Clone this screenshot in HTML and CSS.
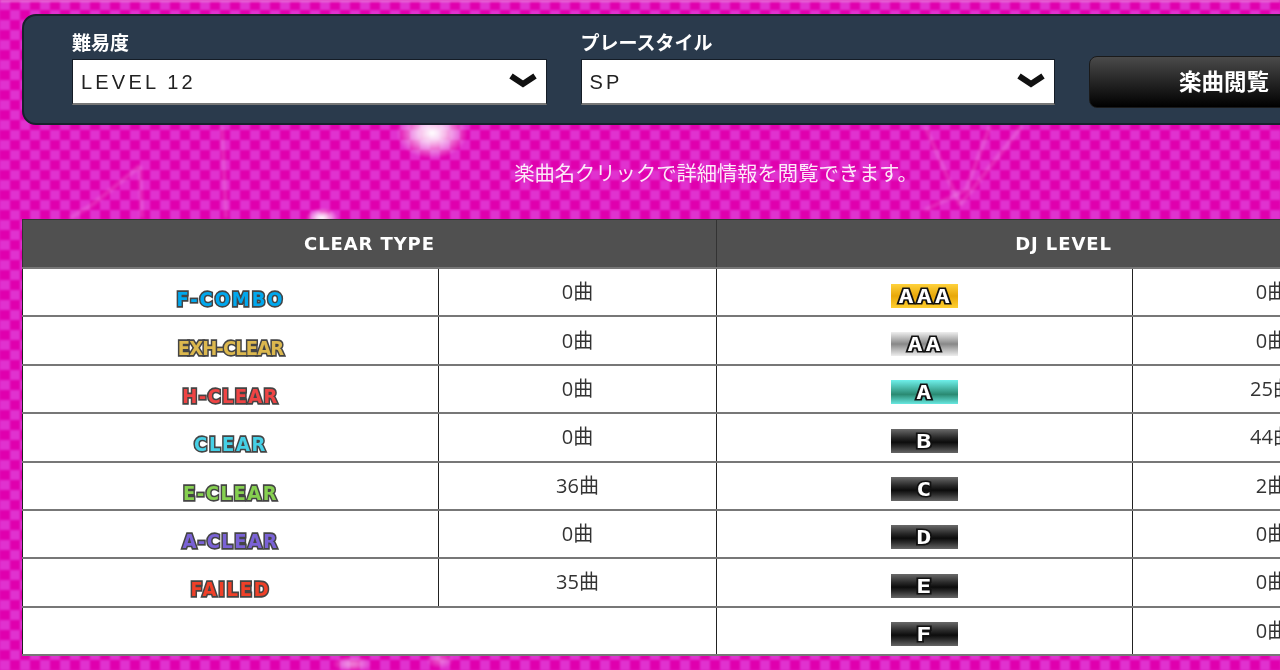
FILE: index.html
```html
<!DOCTYPE html>
<html lang="ja">
<head>
<meta charset="utf-8">
<title>楽曲閲覧</title>
<link rel="stylesheet" href="styles.css">
</head>
<body>
<div class="backdrop">
<svg class="sparkles" width="1280" height="670" viewBox="0 0 1280 670" aria-hidden="true">
  <defs>
    <radialGradient id="glow"><stop offset="0" stop-color="#fff" stop-opacity="1"/><stop offset=".35" stop-color="#fff" stop-opacity=".75"/><stop offset="1" stop-color="#fff" stop-opacity="0"/></radialGradient>
    <filter id="soft"><feGaussianBlur stdDeviation="1.5"/></filter>
  </defs>
  <ellipse cx="432" cy="133" rx="36" ry="26" fill="url(#glow)"/>
  <ellipse cx="322" cy="218" rx="16" ry="10" fill="url(#glow)"/>
  <ellipse cx="352" cy="664" rx="20" ry="8" fill="url(#glow)" opacity=".5"/>
  <ellipse cx="440" cy="660" rx="14" ry="9" fill="url(#glow)" opacity=".35"/>
  <g fill="none" stroke="#fff" stroke-opacity=".22" stroke-width="3" filter="url(#soft)">
    <path d="M140 166 L92 205 L70 218"/>
    <path d="M140 166 L142 218"/>
    <path d="M222 126 L226 218"/>
    <path d="M990 126 L966 190 L925 210"/>
    <path d="M960 205 L925 126"/>
    <path d="M960 205 L1022 126"/>
  </g>
</svg>
</div>
<div class="page">
  <form class="filter-panel">
    <div class="field">
      <label class="field-label">難易度</label>
      <div class="select"><span class="select-value">LEVEL 12</span><svg class="chevron" width="28" height="20" viewBox="0 0 28 20"><path d="M2 4 L14 12 L26 4"/></svg></div>
    </div>
    <div class="field">
      <label class="field-label">プレースタイル</label>
      <div class="select"><span class="select-value">SP</span><svg class="chevron" width="28" height="20" viewBox="0 0 28 20"><path d="M2 4 L14 12 L26 4"/></svg></div>
    </div>
    <button class="browse" type="button"><span class="browse-text">楽曲閲覧</span></button>
  </form>
  <p class="notice">楽曲名クリックで詳細情報を閲覧できます。</p>
  <table class="stats">
    <colgroup><col class="col-a"><col class="col-b"><col class="col-a"><col class="col-b"></colgroup>
    <thead><tr><th colspan="2">CLEAR TYPE</th><th colspan="2">DJ LEVEL</th></tr></thead>
    <tbody>
      <tr><td><span class="lamp fc">F-COMBO</span></td><td>0曲</td><td><span class="grade gold"><b>AAA</b></span></td><td>0曲</td></tr>
      <tr><td><span class="lamp ex">EXH-CLEAR</span></td><td>0曲</td><td><span class="grade silver"><b>AA</b></span></td><td>0曲</td></tr>
      <tr><td><span class="lamp hard">H-CLEAR</span></td><td>0曲</td><td><span class="grade teal"><b>A</b></span></td><td>25曲</td></tr>
      <tr><td><span class="lamp clr">CLEAR</span></td><td>0曲</td><td><span class="grade"><b>B</b></span></td><td>44曲</td></tr>
      <tr><td><span class="lamp easy">E-CLEAR</span></td><td>36曲</td><td><span class="grade"><b>C</b></span></td><td>2曲</td></tr>
      <tr><td><span class="lamp assist">A-CLEAR</span></td><td>0曲</td><td><span class="grade"><b>D</b></span></td><td>0曲</td></tr>
      <tr><td><span class="lamp fail">FAILED</span></td><td>35曲</td><td><span class="grade"><b>E</b></span></td><td>0曲</td></tr>
      <tr><td colspan="2"></td><td><span class="grade"><b>F</b></span></td><td>0曲</td></tr>
    </tbody>
  </table>
</div>
</body>
</html>
```
FILE: styles.css
```css
html, body {
  margin: 0;
  height: 670px;
  overflow: hidden;
}
body {
  position: relative;
  background: #e018be;
  font-family: "Open Sans", "Noto Sans CJK JP", sans-serif;
  font-size: 20px;
}
.backdrop {
  position: absolute;
  left: 0;
  top: 0;
  width: 1280px;
  height: 670px;
  background-image:
    linear-gradient(#e87ad8, #e87ad8),
    repeating-conic-gradient(#e000ae 0 25%, #e032cf 0 50%);
  background-size: 100% 2px, 20px 20px;
  background-repeat: no-repeat, repeat;
  filter: blur(0.8px);
}
.page {
  position: relative;
  width: 1388px;
  padding: 14px 0 0 22px;
  filter: blur(0.45px);
}
.filter-panel {
  box-sizing: border-box;
  height: 111px;
  display: flex;
  align-items: flex-start;
  gap: 34px;
  padding: 13px 49px 0 48px;
  background: #2a3a4c;
  border: 2px solid #18212c;
  border-radius: 14px;
}
.field {
  width: 475px;
  display: flex;
  flex-direction: column;
}
.field-label {
  height: 30px;
  line-height: 25px;
  color: #fff;
  font-family: "Noto Sans CJK JP", sans-serif;
  font-weight: 700;
  font-size: 19px;
}
.select {
  box-sizing: border-box;
  height: 46px;
  display: flex;
  align-items: center;
  justify-content: space-between;
  padding: 1px 9px 0 8px;
  background: #fff;
  border: 1px solid #141c26;
  border-bottom: 2px solid #777;
}
.select-value {
  font-family: "Liberation Sans", sans-serif;
  font-size: 20px;
  letter-spacing: 3.2px;
  color: #222;
}
.chevron {
  fill: none;
  stroke: #111;
  stroke-width: 6;
}
.browse {
  flex: 0 0 270px;
  height: 52px;
  margin-top: 27px;
  padding: 0;
  border: 1px solid #1a1a1a;
  border-radius: 8px;
  background: linear-gradient(#4a4a4a, #000);
  color: #fff;
  font-family: "Noto Sans CJK JP", sans-serif;
  font-weight: 700;
  font-size: 22.5px;
}
.browse-text {
  display: block;
  margin-top: -5px;
}
.notice {
  height: 94px;
  margin: 0;
  padding-top: 33px;
  box-sizing: border-box;
  text-align: center;
  color: #fff;
  font-family: "Noto Sans CJK JP", sans-serif;
  font-size: 20.3px;
  line-height: 28px;
  opacity: .9;
}
.stats {
  width: 1388px;
  table-layout: fixed;
  border-collapse: collapse;
  background: #fff;
  color: #333;
}
.col-a { width: 416px; }
.col-b { width: 278px; }
.stats th {
  height: 47px;
  padding: 0;
  background: #505050;
  color: #fff;
  border: 1px solid #333;
  font-family: "DejaVu Sans", sans-serif;
  font-weight: 700;
  font-size: 18px;
  letter-spacing: .9px;
}
.stats td {
  height: 48.375px;
  padding: 0 0 3px;
  box-sizing: border-box;
  text-align: center;
  border-top: 2px solid #777;
  border-bottom: 2px solid #777;
  border-left: 1px solid #222;
  border-right: 1px solid #222;
}
.lamp {
  position: relative;
  top: 7px;
  display: inline-block;
  font-family: "DejaVu Sans", sans-serif;
  font-weight: 700;
  font-size: 18px;
  line-height: 18px;
  -webkit-text-stroke: 3px #444;
  paint-order: stroke fill;
  transform: scaleY(1.1);
  filter: blur(0.3px);
}
.fc { color: #00a8ee; letter-spacing: 1.9px; }
.ex { color: #dcb84e; letter-spacing: -.9px; }
.hard { color: #ee4444; letter-spacing: 1.3px; }
.clr { color: #46d0e6; letter-spacing: 1.6px; }
.easy { color: #86d050; letter-spacing: 1.5px; }
.assist { color: #7a62d6; letter-spacing: 1.4px; }
.fail { color: #f04028; letter-spacing: 1.7px; }
.grade {
  position: relative;
  top: 3px;
  display: inline-flex;
  justify-content: center;
  align-items: center;
  width: 67px;
  height: 24px;
  vertical-align: middle;
  background: linear-gradient(#6a6a6a, #2a2a2a 35%, #0c0c0c 55%, #2a2a2a 72%, #666);
}
.grade b {
  display: block;
  font-family: "DejaVu Sans Mono", monospace;
  font-weight: 700;
  font-size: 20px;
  line-height: 20px;
  letter-spacing: 2.4px;
  margin-right: -2.4px;
  color: #fff;
  -webkit-text-stroke: 3px #111;
  paint-order: stroke fill;
  transform: scaleX(1.25);
}
.gold { background: linear-gradient(#ffd23c, #e8a808 50%, #ffcf30); }
.silver { background: linear-gradient(#eee, #888 50%, #eee); }
.teal { background: linear-gradient(#6ff0ea, #2a8a72 60%, #68e8e0); }
```
